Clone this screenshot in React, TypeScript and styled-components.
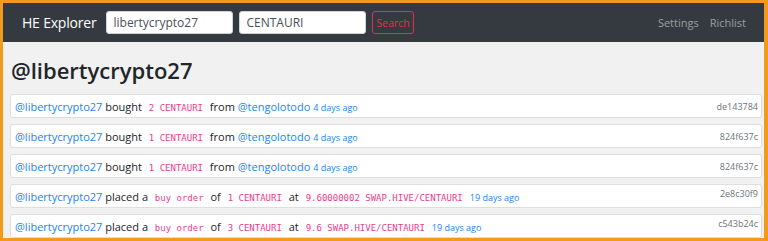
import { FC } from "react";
import styled, { createGlobalStyle } from "styled-components";

const GlobalStyle = createGlobalStyle`
  html, body {
    margin: 0;
    padding: 0;
  }
  body {
    font-family: "Open Sans", "Noto Sans", sans-serif;
    color: #212529;
  }
`;

const Frame = styled.div`
  box-sizing: border-box;
  height: 241px;
  overflow: hidden;
  border-style: solid;
  border-color: #f29a1c;
  border-width: 3px 4px 3px 3px;
  background: #f1f1f1;
`;

const NavBar = styled.nav`
  display: flex;
  align-items: center;
  height: 39px;
  padding: 0 18px 0 19px;
  background: #343a40;
`;

const Brand = styled.a`
  font-size: 14px;
  letter-spacing: -0.2px;
  color: #fff;
  margin-right: 10px;
  white-space: nowrap;
`;

const SearchInput = styled.input`
  box-sizing: border-box;
  width: 127px;
  height: 23px;
  margin-right: 6px;
  padding: 0 6px;
  border: 1px solid #ced4da;
  border-radius: 3px;
  background: #fff;
  font-family: inherit;
  font-size: 12px;
  color: #495057;
  outline: none;
`;

const SearchButton = styled.button`
  box-sizing: border-box;
  height: 23px;
  padding: 0 3px;
  border: 1px solid #dc3545;
  border-radius: 3px;
  background: transparent;
  font-family: inherit;
  font-size: 10.5px;
  color: #dc3545;
`;

const NavLinks = styled.div`
  display: flex;
  gap: 11px;
  margin-left: auto;
`;

const NavLink = styled.a`
  font-size: 11px;
  color: rgba(255, 255, 255, 0.5);
`;

const Main = styled.main`
  padding: 0 2px 0 7px;
`;

const Heading = styled.h1`
  margin: 12px 0 8px 1px;
  font-size: 22px;
  font-weight: 600;
  line-height: 32px;
`;

const Row = styled.div`
  box-sizing: border-box;
  display: flex;
  align-items: flex-start;
  height: 24px;
  margin-bottom: 6px;
  padding: 4px 3px 0 4px;
  border: 1px solid #dedede;
  border-radius: 3px;
  background: #fff;
  font-size: 11px;
  line-height: 15px;
  white-space: nowrap;
`;

const Line = styled.div`
  flex: 1;
`;

const User = styled.a`
  color: #1a84f5;
`;

const Code = styled.code`
  font-family: "DejaVu Sans Mono", "Liberation Mono", monospace;
  font-size: 9px;
  color: #e83e8c;
  margin: 0 4px;
`;

const Ago = styled.small`
  font-size: 9px;
  color: #1a84f5;
  margin-left: 3px;
`;

const Hash = styled.span<{ $top: number }>`
  font-size: 9px;
  color: #6c757d;
  margin-top: ${(p) => p.$top}px;
`;

type Trade = { amount: string; hash: string };
type Order = { qty: string; price: string; hash: string };

const trades: Trade[] = [
  { amount: "2 CENTAURI", hash: "de143784" },
  { amount: "1 CENTAURI", hash: "824f637c" },
  { amount: "1 CENTAURI", hash: "824f637c" },
];

const orders: Order[] = [
  { qty: "1 CENTAURI", price: "9.60000002 SWAP.HIVE/CENTAURI", hash: "2e8c30f9" },
  { qty: "3 CENTAURI", price: "9.6 SWAP.HIVE/CENTAURI", hash: "c543b24c" },
];

const App: FC = () => (
  <>
    <GlobalStyle />
    <Frame>
      <NavBar>
        <Brand>HE Explorer</Brand>
        <SearchInput defaultValue="libertycrypto27" />
        <SearchInput defaultValue="CENTAURI" />
        <SearchButton>Search</SearchButton>
        <NavLinks>
          <NavLink>Settings</NavLink>
          <NavLink>Richlist</NavLink>
        </NavLinks>
      </NavBar>

      <Main>
        <Heading>@libertycrypto27</Heading>

        {trades.map((t, i) => (
          <Row key={"t" + i}>
            <Line>
              <User>@libertycrypto27</User> bought <Code>{t.amount}</Code> from{" "}
              <User>@tengolotodo</User>
              <Ago>4 days ago</Ago>
            </Line>
            <Hash $top={0}>{t.hash}</Hash>
          </Row>
        ))}

        {orders.map((o, i) => (
          <Row key={"o" + i}>
            <Line>
              <User>@libertycrypto27</User> placed a <Code>buy order</Code> of{" "}
              <Code>{o.qty}</Code> at <Code>{o.price}</Code>
              <Ago>19 days ago</Ago>
            </Line>
            <Hash $top={-3}>{o.hash}</Hash>
          </Row>
        ))}
      </Main>
    </Frame>
  </>
);

export default App;
